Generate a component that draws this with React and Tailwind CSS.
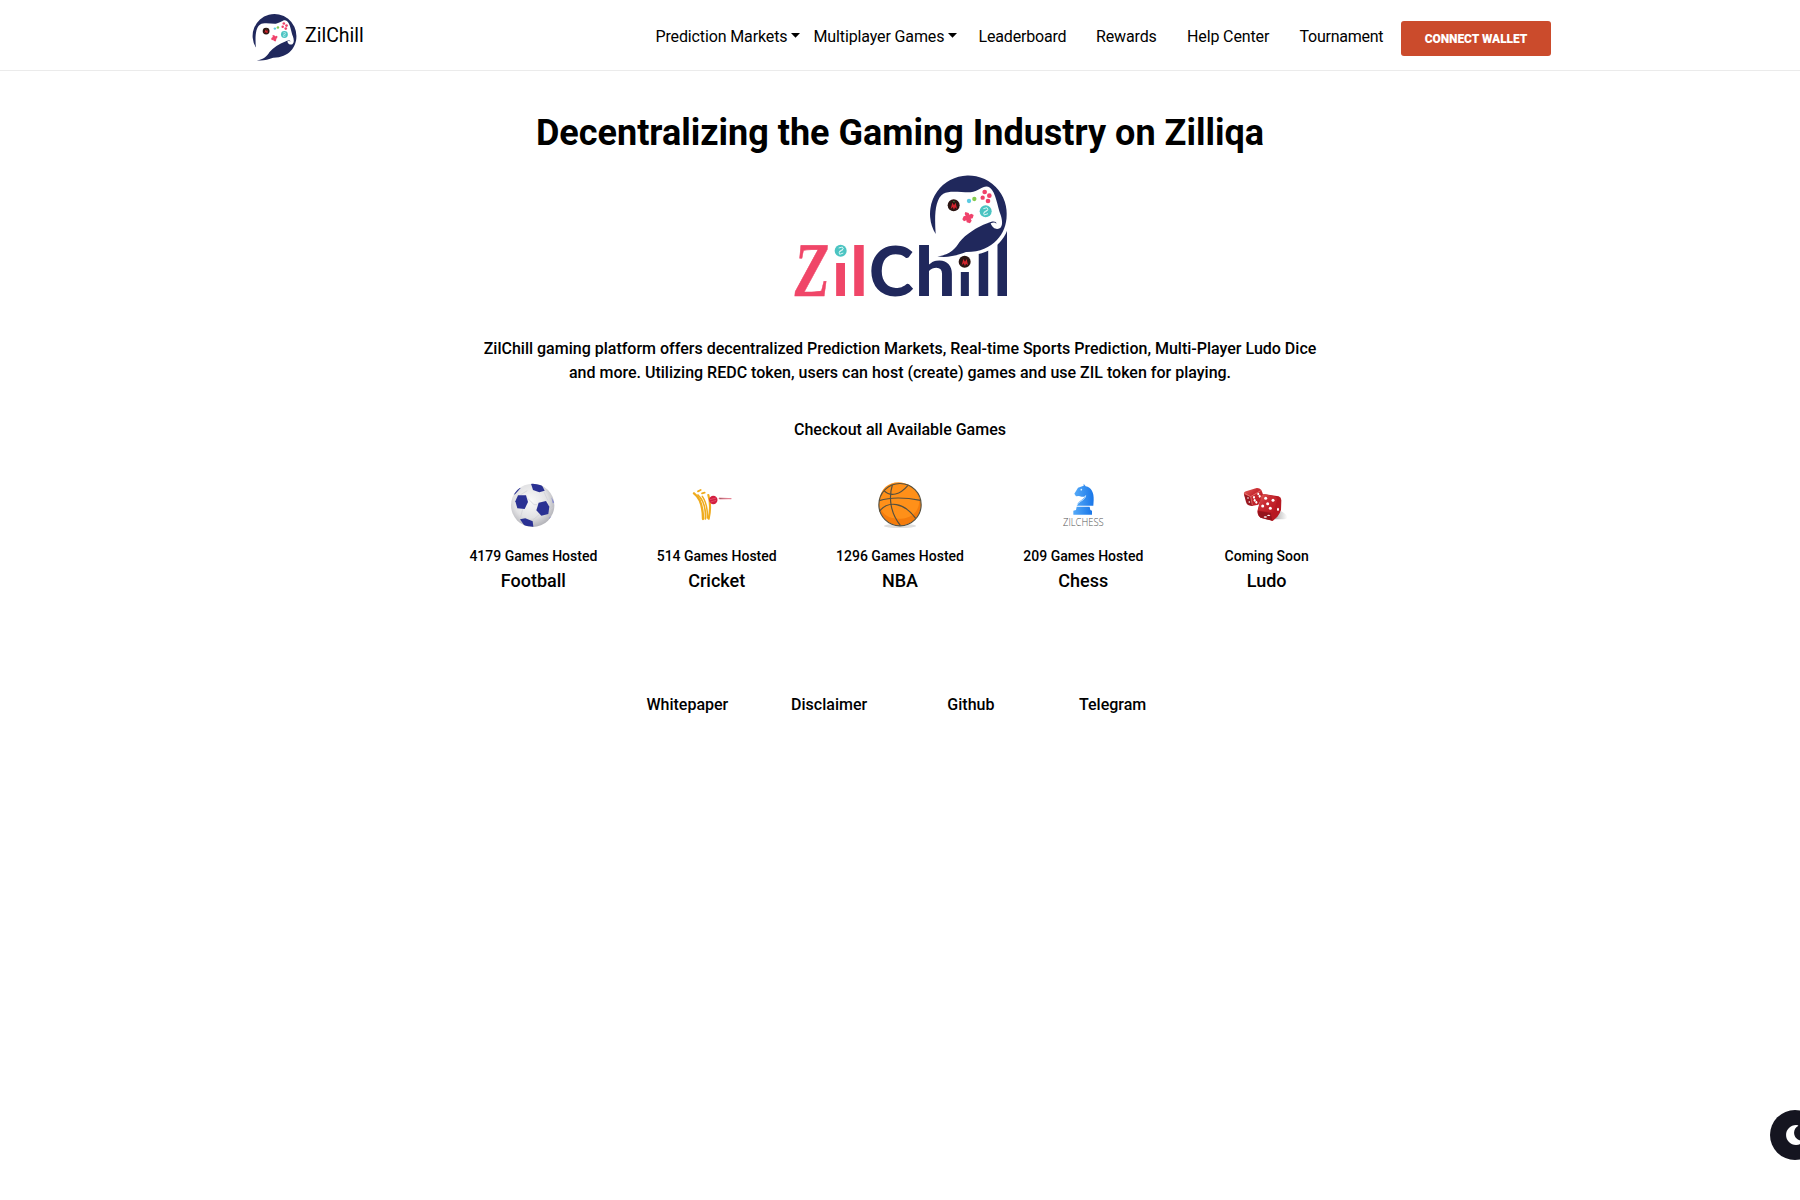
import React from "react";
import { FaMoon } from "react-icons/fa";

function Mark() {
  return (
    <g>
      <path
        d="M467 207 A115 115.5 0 1 1 680 150 C680 205 640 262 558 261 C530 272 500 279 472 274 C508 271 526 252 538 232 C558 207 590 187 622 175 C640 166 650 170 649 176 C646 172 640 172 632 175 C638 192 650 194 659 190 C668 184 668 168 662 150 C652 124 648 82 630 68 C612 56 600 78 572 82 C545 83 510 75 490 86 C465 102 463 150 467 207Z"
        fill="#20285c"
      />
      <circle cx="521" cy="121" r="18" fill="#2b1512" />
      <path d="M512 132 l5 -19 l5 8 l5 -8 l4 19 l-6 -5 l-3 7 l-4 -8z" fill="#d3232c" />
      <path d="M518 111 l4 -4 l3 5z" fill="#3f8a3c" />
      <circle cx="567" cy="108" r="6.5" fill="#5bcbe3" />
      <circle cx="583" cy="102" r="6.5" fill="#83cb4c" />
      <g fill="#f0426b">
        <circle cx="614" cy="81" r="7" />
        <circle cx="608" cy="98" r="6.5" />
        <circle cx="628" cy="92" r="7" />
        <circle cx="624" cy="108" r="7" />
        <path d="M556 141 l10 3 l2 5 l6 -3 l7 4 l-3 10 l-6 1 l3 6 l-5 8 l-10 -3 l-1 -6 l-7 3 l-5 -6 l4 -9 l6 -2 l-3 -5z" />
      </g>
      <circle cx="617" cy="139" r="18" fill="#4bc4c2" />
      <path d="M610 131 L621 128 L624 134 L611 142 M623 136 L611 144 L613 150 L624 146" fill="none" stroke="#d9f5f3" strokeWidth="3" />
    </g>
  );
}

function Logo() {
  return (
    <svg width="240" height="140" viewBox="0 0 720 420" className="block overflow-visible">
      <g fontFamily="Lato" fontWeight="900" fill="#20285c">
        <text transform="translate(37 392) skewX(-5)" fontFamily="Liberation Serif" fontWeight="700" fontSize="231" textLength="106" lengthAdjust="spacingAndGlyphs" fill="#f04668" stroke="#f04668" strokeWidth="2">Z</text>
        <text x="181.500" y="392" fontSize="192" textAnchor="middle" fill="#f04668">i</text>
        <text x="237" y="392" fontSize="206" textAnchor="middle" fill="#f04668">l</text>
        <text x="267" y="393" fontSize="204" textLength="134" lengthAdjust="spacingAndGlyphs">C</text>
        <text x="405" y="392" fontSize="206" textLength="122" lengthAdjust="spacingAndGlyphs">h</text>
        <text transform="translate(554.500 392) scale(1.3 1)" fontSize="135" textAnchor="middle">i</text>
        <text x="610.500" y="392" fontSize="206" textAnchor="middle">l</text>
        <text transform="translate(666.500 392) scale(.75 1)" fontSize="275" textAnchor="middle">l</text>
      </g>
      <path d="M690 150 C690 215 645 272 558 270 L470 285 L535 232 L620 176 L680 140Z" fill="#fff" />
      <Mark />
      <circle cx="182" cy="266" r="25" fill="#fff" />
      <circle cx="182" cy="257" r="18" fill="#4bc4c2" />
      <path d="M176 249 L187 246 L190 252 L177 260 M189 254 L177 262 L179 268 L190 264" fill="none" stroke="#d9f5f3" strokeWidth="3" />
      <circle cx="554" cy="290" r="20" fill="#fff" />
      <rect x="535" y="290" width="38" height="31" fill="#fff" />
      <circle cx="554" cy="290" r="18" fill="#2b1512" />
      <path d="M545 301 l5 -19 l5 8 l5 -8 l4 19 l-6 -5 l-3 7 l-4 -8z" fill="#d3232c" />
    </svg>
  );
}

function Football() {
  return (
    <svg width="60" height="70" viewBox="0 0 180 210">
      <defs>
        <radialGradient id="fb" cx=".45" cy=".4" r=".6">
          <stop offset="0" stopColor="#fafafa" />
          <stop offset=".65" stopColor="#e2e2e4" />
          <stop offset="1" stopColor="#b4b4ba" />
        </radialGradient>
        <clipPath id="fbc"><circle cx="98" cy="106" r="65" /></clipPath>
      </defs>
      <circle cx="98" cy="106" r="65" fill="url(#fb)" />
      <g clipPath="url(#fbc)">
        <path d="M82 62 L62 74 M132 66 L144 92 M82 84 L102 104 L112 104 M68 118 L62 140 M118 134 L98 150 M146 122 L160 112" stroke="#cfcfd4" strokeWidth="2" fill="none" />
        <g fill="#2a3193">
          <path d="M92 38 L124 42 L134 62 L118 67 L99 60Z" />
          <path d="M54 76 L78 76 L84 96 L74 117 L52 115 L46 94Z" />
          <path d="M116 98 L138 93 L148 110 L145 132 L124 137 L109 121Z" />
          <path d="M60 148 L76 145 L98 154 L100 170 L74 168Z" />
          <path d="M34 78 L54 52 L62 54 L46 72Z" />
        </g>
        <path d="M154 82 L164 98 L158 100Z M150 148 L160 136 L146 144Z" fill="#8b8fd0" />
      </g>
    </svg>
  );
}

function Cricket() {
  return (
    <svg width="60" height="70" viewBox="0 0 180 210">
      <g fill="none" stroke="#efab1d" strokeLinecap="round">
        <path d="M42 70 C58 82 69 110 69 147" strokeWidth="7" />
        <path d="M54 75 C70 90 78 114 76 147" strokeWidth="5" />
        <path d="M67 79 C80 98 83 120 82 144" strokeWidth="4.500" />
        <path d="M85 75 C92 98 90 128 86 146" strokeWidth="6.500" />
        <path d="M54 64 L62 60 M66 70 L74 68" strokeWidth="5.500" />
      </g>
      <circle cx="100" cy="90" r="12.500" fill="#d31f40" />
      <path d="M90 89 L108 84 M92 96 L108 91" stroke="#ed7189" strokeWidth="1.500" />
      <path d="M117 84 L154 86 L118 87Z" stroke="#e47b8d" strokeWidth="2.500" />
    </svg>
  );
}

function Basketball() {
  return (
    <svg width="60" height="70" viewBox="0 0 180 210">
      <ellipse cx="90" cy="168" rx="48" ry="6" fill="#dedede" />
      <circle cx="90" cy="104" r="63" fill="#f57c0c" />
      <path d="M28 96 C30 20 125 20 145 78 C155 110 135 145 92 146 C55 148 28 130 28 96Z" fill="#ff9019" />
      <g fill="none" stroke="#56503f" strokeWidth="3.500">
        <circle cx="90" cy="104" r="63.500" />
        <path d="M67 45 C55 85 62 130 91 166" />
        <path d="M42 62 C62 82 90 74 114 46" />
        <path d="M28 92 C70 78 115 84 152 91" />
        <path d="M28 124 C55 90 102 97 137 145" />
      </g>
    </svg>
  );
}

function Chess() {
  return (
    <svg width="70" height="70" viewBox="0 0 210 210">
      <defs>
        <linearGradient id="ch"><stop offset="0" stopColor="#55aaf8" /><stop offset="1" stopColor="#1976e8" /></linearGradient>
      </defs>
      <g fill="url(#ch)">
        <path d="M101 41 L107 49 C124 52 132 68 131 90 L130 107 L81 107 C82 94 99 91 106 78 C98 83 92 79 87 78 L78 79 L73 71 L84 53 L101 47Z" />
        <path d="M80 110 L119 110 L121 120 L126 122 L126 134 L70 134 L70 122 L78 120Z" />
      </g>
      <circle cx="94" cy="59" r="2.500" fill="#d9efff" />
      <path d="M81 106 C87 91 106 92 107 76" fill="none" stroke="#bee1ff" strokeWidth="3" />
      <text x="39" y="168" fontFamily="Open Sans" fontWeight="300" fontSize="32" fill="#555" textLength="122" lengthAdjust="spacingAndGlyphs">ZILCHESS</text>
    </svg>
  );
}

function Dice() {
  return (
    <svg width="70" height="70" viewBox="0 0 210 210">
      <defs>
        <linearGradient id="di" x1="0" y1="0" x2="1" y2="1"><stop offset="0" stopColor="#e2635c" /><stop offset=".4" stopColor="#c92c33" /><stop offset="1" stopColor="#b9161f" /></linearGradient>
        <linearGradient id="sh"><stop offset="0" stopColor="#777" /><stop offset="1" stopColor="#fff" /></linearGradient>
      </defs>
      <path d="M106 148 L154 124 Q186 144 162 148Z" fill="url(#sh)" />
      <path d="M42 73 Q40 67 48 64 L80 54 Q88 53 94 60 L100 76 L85 104 L65 108 L54 105Z" fill="url(#di)" />
      <path d="M42 73 L62 81 L68 107 L55 105 Q50 104 48 96Z" fill="#991821" />
      <path d="M44 70 L62 80 L92 62 M62 80 L67 105" fill="none" stroke="#ed8a80" strokeWidth="2" />
      <g fill="#fff">
        <ellipse cx="72" cy="82" rx="3" ry="4" /><ellipse cx="74" cy="91" rx="3" ry="4" /><ellipse cx="79" cy="97" rx="3" ry="4" />
        <ellipse cx="85" cy="72" rx="3" ry="4" /><ellipse cx="89" cy="79" rx="3" ry="4" /><circle cx="54" cy="84" r="2.500" /><circle cx="58" cy="96" r="2.500" />
      </g>
      <path d="M94 78 Q97 71 105 73 L146 79 Q154 82 154 91 L153 120 Q151 128 142 140 L128 153 L92 143 Q82 137 82 124Z" fill="#b71922" />
      <path d="M94 78 Q97 71 105 73 L134 79 Q142 82 141 90 L132 122 Q130 128 122 127 L84 121Z" fill="url(#di)" />
      <path d="M84 123 L122 129 L127 152 L92 143 Q84 138 84 123Z" fill="#95131c" />
      <g fill="#fff">
        <circle cx="107" cy="85" r="4.500" /><circle cx="129" cy="91" r="4.500" /><circle cx="113" cy="101" r="4.500" /><circle cx="98" cy="108" r="4.500" /><circle cx="121" cy="115" r="4.500" />
        <ellipse cx="144" cy="118" rx="3" ry="5" />
        <ellipse cx="106" cy="141" rx="5" ry="2" /><ellipse cx="116" cy="136" rx="5" ry="2" />
      </g>
    </svg>
  );
}

const games = [
  { Icon: Football, count: "4179 Games Hosted", name: "Football", shift: "ml-[-6px]" },
  { Icon: Cricket, count: "514 Games Hosted", name: "Cricket", shift: "ml-[-13px]" },
  { Icon: Basketball, count: "1296 Games Hosted", name: "NBA", shift: "" },
  { Icon: Chess, count: "209 Games Hosted", name: "Chess", shift: "ml-[3px]" },
  { Icon: Dice, count: "Coming Soon", name: "Ludo", shift: "ml-[-3px]" },
];

function Caret() {
  return (
    <svg className="ml-1 inline-block align-[4px]" width="9" height="5" viewBox="0 0 9 5">
      <path d="M0 0H9L4.500 4.700Z" />
    </svg>
  );
}

export default function App() {
  return (
    <div className="min-h-[1200px] bg-white font-['Roboto',sans-serif] text-base text-black">
      <header className="h-[71px] border-b border-[#ebebeb]">
        <div className="mx-auto flex h-full w-[1300px] pl-[2px]">
          <a className="flex items-start">
            <svg className="mt-[13px]" width="45" height="48" viewBox="448 26 234 252"><Mark /></svg>
            <span className="ml-2 mt-[22px] text-[19.5px] leading-7">ZilChill</span>
          </a>
          <nav className="ml-auto flex pt-[25px] leading-6 tracking-[-0.13px] whitespace-nowrap">
            <a className="w-[158px]">Prediction Markets<Caret /></a>
            <a className="w-[165px]">Multiplayer Games<Caret /></a>
            <a className="w-[117.5px] tracking-[-0.17px]">Leaderboard</a>
            <a className="w-[91px]">Rewards</a>
            <a className="w-[112.5px]">Help Center</a>
            <a className="w-[101.5px] tracking-[-0.25px]">Tournament</a>
          </nav>
          <button className="mt-[21px] mr-[-1px] h-[35px] w-[150px] rounded-[3px] bg-[#cb4b2c] text-xs font-black tracking-[-0.05px] text-white">CONNECT WALLET</button>
        </div>
      </header>
      <main className="flex flex-col items-center font-medium">
        <h1 className="mt-[39px] text-[36px] leading-[46px] font-bold">Decentralizing the Gaming Industry on Zilliqa</h1>
        <div className="mt-[9px]"><Logo /></div>
        <p className="mt-[32px] w-[860px] text-center leading-6">
          ZilChill gaming platform offers decentralized Prediction Markets, Real-time Sports Prediction, Multi-Player Ludo Dice<br />and more. Utilizing REDC token, users can host (create) games and use ZIL token for playing.
        </p>
        <p className="mt-[33px] leading-6">Checkout all Available Games</p>
        <div className="mt-[28px] grid w-[916.67px] grid-cols-5">
          {games.map(({ Icon, count, name, shift }) => (
            <div key={name} className="flex flex-col items-center">
              <div className={shift}><Icon /></div>
              <div className="mt-[6px] text-sm leading-[21px]">{count}</div>
              <div className="text-lg leading-[27px]">{name}</div>
            </div>
          ))}
        </div>
        <footer className="mt-[99px] grid w-[567px] grid-cols-4 text-center leading-6">
          <a>Whitepaper</a>
          <a>Disclaimer</a>
          <a>Github</a>
          <a>Telegram</a>
        </footer>
      </main>
      <button className="fixed right-[-20px] bottom-10 flex size-[50px] items-center justify-center rounded-full bg-[#151520] text-white">
        <FaMoon size={20} />
      </button>
    </div>
  );
}
